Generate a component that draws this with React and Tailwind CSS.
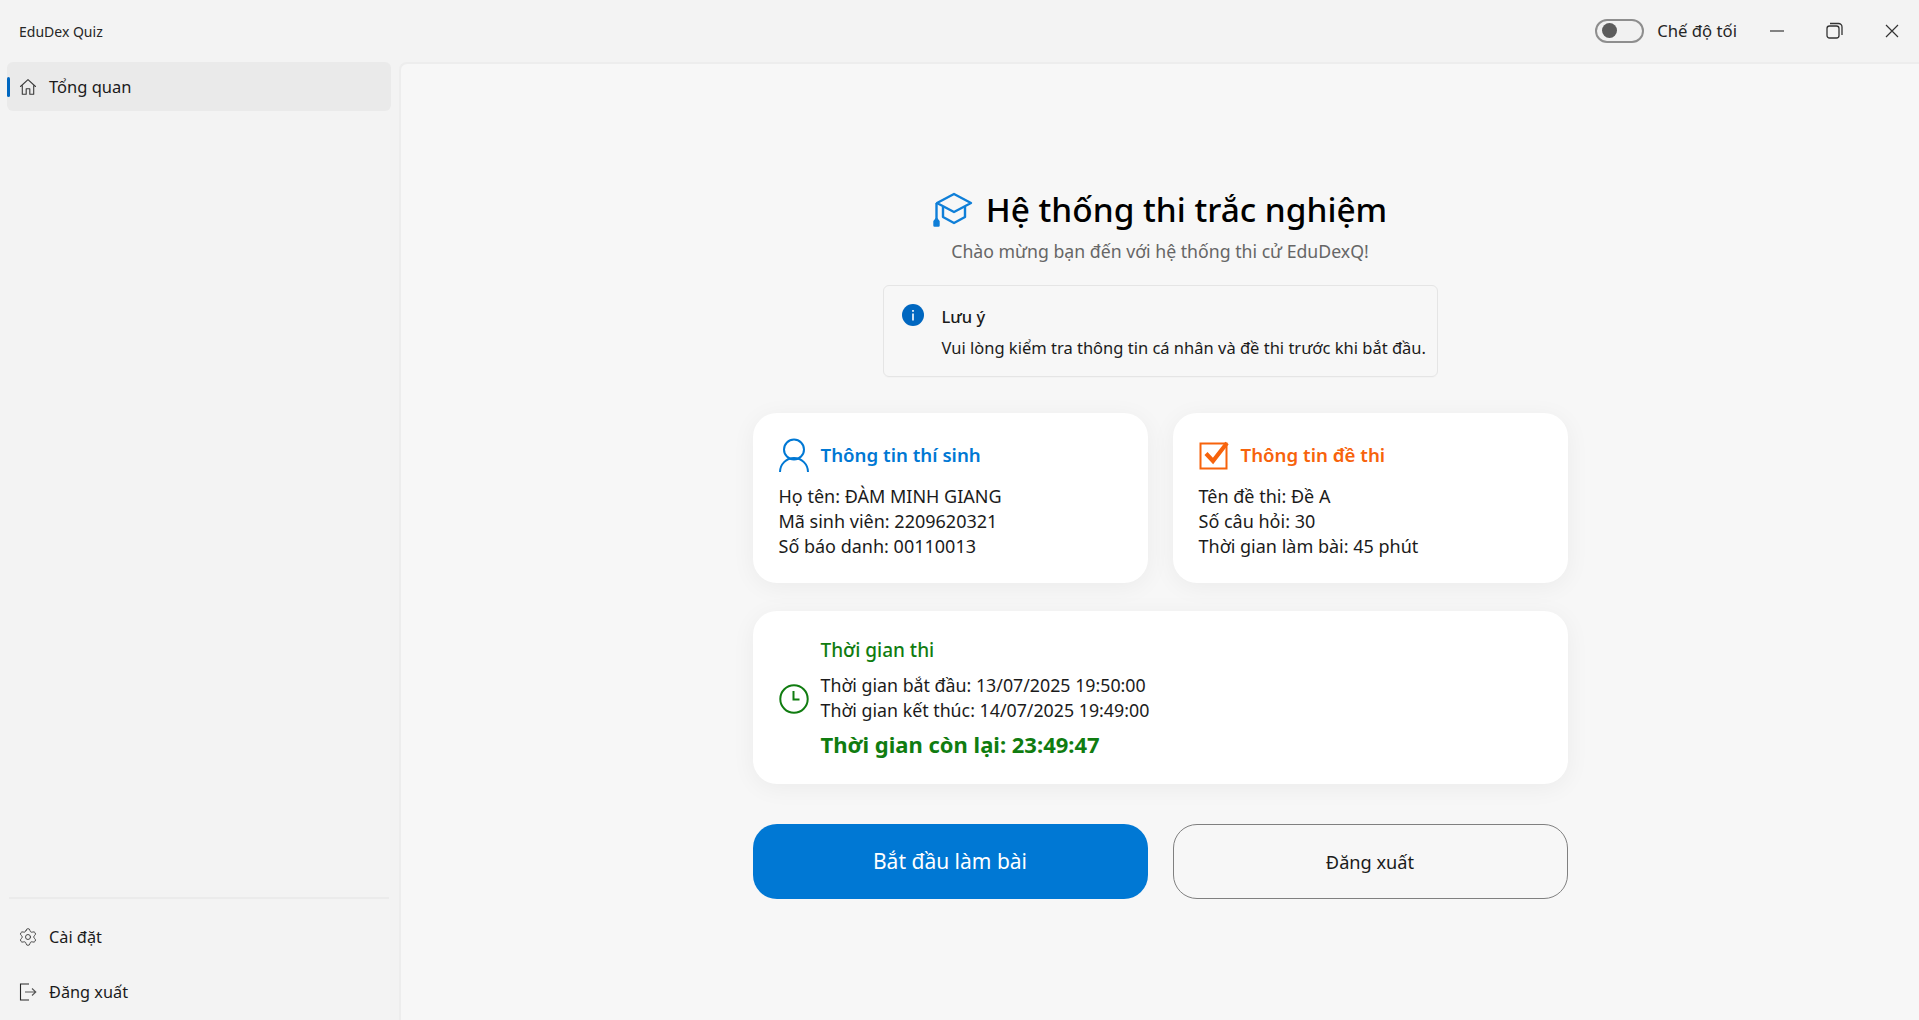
import React from 'react';
import { Settings } from 'lucide-react';

const HomeIcon = () => (
  <svg width="18" height="18" viewBox="0 0 18 18" fill="none" stroke="#3a3a3a" strokeWidth="1.1">
    <path d="M1.5 8.5 9 1.6l7.5 6.9" strokeLinecap="round" strokeLinejoin="round" />
    <path d="M3.3 7.2v9h3.9v-5.4h3.6v5.4h3.9v-9" strokeLinejoin="round" />
  </svg>
);

const LogoutIcon = () => (
  <svg width="18" height="18" viewBox="0 0 18 18" fill="none" stroke="#262626" strokeWidth="1.1">
    <path d="M10 1H1.5v16H10" />
    <path d="M6 9h11M13 5.5 16.8 9 13 12.5" stroke="#555" />
  </svg>
);

const CapIcon = () => (
  <svg width="40" height="35" viewBox="0 0 40 35" fill="none" stroke="#0f7fd8" strokeWidth="2.4" strokeLinejoin="round">
    <path d="M21 2 38 11 21 20 4 11Z" />
    <path d="M10 15v10l11 6 11-6V15" />
    <path d="M3.5 11v16" />
    <path d="M1.5 33.5v-4l2-2.5 2 2.5v4Z" fill="#0f7fd8" />
  </svg>
);

const UserIcon = () => (
  <svg width="30" height="34" viewBox="0 0 30 34" fill="none" stroke="#0078d4" strokeWidth="2">
    <circle cx="15" cy="11.5" r="10" />
    <path d="M1 34a14 14 0 0 1 28 0" />
  </svg>
);

const CheckBoxIcon = () => (
  <svg width="30" height="30" viewBox="0 0 30 30" fill="none">
    <path d="M1.5 3.5h26v25h-26z" stroke="#f7630c" strokeWidth="2" />
    <path d="M7 13.5 14 21 28 3" stroke="#f7630c" strokeWidth="4.2" />
  </svg>
);

const ClockIcon = () => (
  <svg width="30" height="30" viewBox="0 0 30 30" fill="none" stroke="#107c10" strokeWidth="2">
    <circle cx="15" cy="15" r="13.7" />
    <path d="M14.5 7v8.5h6" />
  </svg>
);

const InfoIcon = () => (
  <svg width="22" height="22" viewBox="0 0 22 22">
    <circle cx="11" cy="11" r="11" fill="#0067c0" />
    <rect x="10.2" y="9.5" width="1.6" height="7" fill="#fff" />
    <rect x="10.2" y="6" width="1.6" height="1.8" fill="#fff" />
  </svg>
);

const SideItem = ({ icon, label, active, textSize }) => (
  <div className={`relative flex h-[49px] items-center rounded-md pl-[12px] ${active ? 'bg-[#eaeaea]' : ''}`}>
    {active && <span className="absolute left-0 top-[15px] h-[20px] w-[3px] rounded-full bg-[#0067c0]" />}
    <span className="flex w-[30px] shrink-0">{icon}</span>
    <span className={`${textSize} pt-[1px] text-[#1b1b1b]`}>{label}</span>
  </div>
);

const InfoCard = ({ icon, title, titleColor, lines }) => (
  <div className="h-[170px] rounded-[24px] bg-white px-[26px] pt-[24px] shadow-[0_4px_24px_rgba(0,0,0,0.05)]">
    <div className="flex h-[36px] items-center">
      <span className="flex w-[42px] shrink-0">{icon}</span>
      <span className={`text-[18.7px] font-semibold ${titleColor}`}>{title}</span>
    </div>
    <div className="mt-[11px] text-[18px] leading-[25px] text-[#1b1b1b]">
      {lines.map(line => <p key={line}>{line}</p>)}
    </div>
  </div>
);

const App = () => {
  return (
    <div className="flex h-[1020px] w-full flex-col overflow-hidden bg-[#f3f3f3] font-['Noto_Sans','Open_Sans',sans-serif]">
      {/* title bar */}
      <div className="flex h-[62px] shrink-0 items-center pl-[19px]">
        <span className="text-[14px] text-[#262626]">EduDex Quiz</span>
        <div className="ml-auto flex items-center">
          <span className="flex h-[24px] w-[49px] items-center rounded-full border-2 border-[#8e8e8e] bg-[#f1f1f1] pl-[5px]">
            <span className="h-[15px] w-[15px] rounded-full bg-[#5c5c5c]" />
          </span>
          <span className="ml-[13px] text-[16.7px] text-[#262626]">Chế độ tối</span>
          <svg className="ml-[32px]" width="16" height="16" viewBox="0 0 16 16" stroke="#444" strokeWidth="1.3">
            <path d="M1 8h14" />
          </svg>
          <svg className="ml-[41px]" width="17" height="17" viewBox="0 0 17 17" fill="none" stroke="#333" strokeWidth="1.3">
            <rect x="1" y="4" width="12" height="12" rx="2.5" />
            <path d="M4 1.5h8.5a3.5 3.5 0 0 1 3.5 3.5v8" />
          </svg>
          <svg className="ml-[42px] mr-[20px]" width="14" height="14" viewBox="0 0 14 14" stroke="#333" strokeWidth="1.2">
            <path d="M1 1l12 12M13 1 1 13" />
          </svg>
        </div>
      </div>

      <div className="flex min-h-0 flex-1">
        {/* sidebar */}
        <aside className="flex w-[399px] shrink-0 flex-col pb-[4px] pl-[7px] pr-[8px]">
          <SideItem active label="Tổng quan" textSize="text-[16.5px]" icon={<HomeIcon />} />
          <div className="mt-auto pt-[12px]">
            <div className="mx-[2px] mb-[13px] border-t-2 border-[#ebebeb]" />
            <SideItem label="Cài đặt" textSize="text-[16.3px]" icon={<Settings size={20} strokeWidth={1.1} color="#3a3a3a" className="-ml-[1px]" />} />
            <div className="mt-[6px]">
              <SideItem label="Đăng xuất" textSize="text-[16.3px]" icon={<LogoutIcon />} />
            </div>
          </div>
        </aside>

        {/* content */}
        <main className="flex-1 rounded-tl-lg border-l-2 border-t-2 border-[#ededed] bg-[#f7f7f7] pt-[123px]">
          <div className="mx-auto w-[815px]">
            <div className="flex items-center justify-center">
              <CapIcon />
              <h1 className="ml-[13px] text-[33.4px] font-medium leading-[44px] text-black">Hệ thống thi trắc nghiệm</h1>
            </div>
            <p className="mt-[7px] text-center text-[17.7px] leading-[26px] text-[#666]">Chào mừng bạn đến với hệ thống thi cử EduDexQ!</p>

            <div className="mx-auto mt-[21px] flex h-[92px] w-[555px] rounded-md border border-[#e5e5e5] pl-[18px] pt-[18px] shadow-[0_1px_1px_rgba(0,0,0,0.02)]">
              <InfoIcon />
              <div className="ml-[18px]">
                <p className="text-[16.5px] font-medium leading-[26px] text-[#1b1b1b]">Lưu ý</p>
                <p className="mt-[5px] whitespace-nowrap text-[16.5px] leading-[26px] text-[#1b1b1b]">Vui lòng kiểm tra thông tin cá nhân và đề thi trước khi bắt đầu.</p>
              </div>
            </div>

            <div className="mt-[36px] grid grid-cols-2 gap-[25px]">
              <InfoCard
                title="Thông tin thí sinh"
                titleColor="text-[#0078d4]"
                icon={<UserIcon />}
                lines={['Họ tên: ĐÀM MINH GIANG', 'Mã sinh viên: 2209620321', 'Số báo danh: 00110013']}
              />
              <InfoCard
                title="Thông tin đề thi"
                titleColor="text-[#f7630c]"
                icon={<CheckBoxIcon />}
                lines={['Tên đề thi: Đề A', 'Số câu hỏi: 30', 'Thời gian làm bài: 45 phút']}
              />
            </div>

            <div className="mt-[28px] flex h-[173px] items-center rounded-[24px] bg-white pl-[26px] shadow-[0_4px_24px_rgba(0,0,0,0.05)]">
              <span className="mt-[3px] flex w-[42px] shrink-0"><ClockIcon /></span>
              <div className="pt-[2px]">
                <p className="-mt-[1px] text-[19px] font-medium leading-[28px] text-[#107c10]">Thời gian thi</p>
                <div className="mt-[9px] text-[17.8px] leading-[25px] text-[#1b1b1b]">
                  <p>Thời gian bắt đầu: 13/07/2025 19:50:00</p>
                  <p>Thời gian kết thúc: 14/07/2025 19:49:00</p>
                </div>
                <p className="mt-[5px] text-[22px] font-bold leading-[32px] text-[#107c10]">Thời gian còn lại: 23:49:47</p>
              </div>
            </div>

            <div className="mt-[40px] grid grid-cols-2 gap-[25px]">
              <button className="h-[75px] rounded-[24px] bg-[#0078d4] text-[21px] text-white">Bắt đầu làm bài</button>
              <button className="h-[75px] rounded-[24px] border-[1.5px] border-[#808080] pt-[2px] text-[18.2px] text-[#1b1b1b]">Đăng xuất</button>
            </div>
          </div>
        </main>
      </div>
    </div>
  );
};

export default App;
